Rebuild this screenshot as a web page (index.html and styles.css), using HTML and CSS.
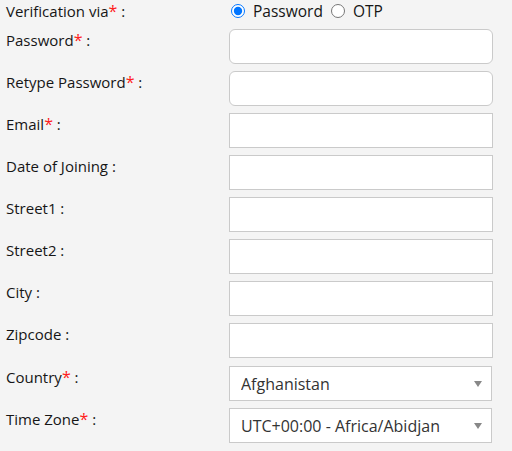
FILE: index.html
```html
<!DOCTYPE html>
<html>
<head>
<meta charset="utf-8">
<link rel="stylesheet" href="styles.css">
</head>
<body>
<form class="form">
  <div class="row row-radio">
    <label class="lbl">Verification via<span class="req">*</span> :</label>
    <div class="ctrl radios">
      <label class="opt"><input type="radio" name="via" checked> Password</label>
      <label class="opt"><input type="radio" name="via"> OTP</label>
    </div>
  </div>
  <div class="row">
    <label class="lbl">Password<span class="req">*</span> :</label>
    <input class="field rounded" type="password">
  </div>
  <div class="row">
    <label class="lbl">Retype Password<span class="req">*</span> :</label>
    <input class="field rounded" type="password">
  </div>
  <div class="row">
    <label class="lbl">Email<span class="req">*</span> :</label>
    <input class="field" type="text">
  </div>
  <div class="row">
    <label class="lbl">Date of Joining :</label>
    <input class="field" type="text">
  </div>
  <div class="row">
    <label class="lbl">Street1 :</label>
    <input class="field" type="text">
  </div>
  <div class="row">
    <label class="lbl">Street2 :</label>
    <input class="field" type="text">
  </div>
  <div class="row">
    <label class="lbl">City :</label>
    <input class="field" type="text">
  </div>
  <div class="row">
    <label class="lbl">Zipcode :</label>
    <input class="field" type="text">
  </div>
  <div class="row row-select first-select">
    <label class="lbl">Country<span class="req">*</span> :</label>
    <div class="select-wrap">
      <select class="field sel"><option>Afghanistan</option></select>
    </div>
  </div>
  <div class="row row-select">
    <label class="lbl">Time Zone<span class="req">*</span> :</label>
    <div class="select-wrap">
      <select class="field sel"><option>UTC+00:00 - Africa/Abidjan</option></select>
    </div>
  </div>
</form>
</body>
</html>
```

FILE: styles.css
```css
html, body {
  margin: 0;
  padding: 0;
  background: #f4f4f4;
}
body {
  font-family: "Open Sans", "Liberation Sans", sans-serif;
  font-size: 15px;
  color: #161616;
}
.form {
  padding-left: 6px;
  display: flex;
  flex-direction: column;
}
.row {
  display: flex;
  align-items: flex-start;
  margin-bottom: 7px;
}
.row-radio {
  height: 22px;
}
.lbl {
  width: 223px;
  flex: none;
  line-height: 20px;
  padding-top: 1px;
}
.row-radio .lbl {
  padding-top: 1px;
}
.req {
  color: #ff1a1a;
  font-size: 16px;
}
.radios {
  display: flex;
  align-items: center;
  gap: 6px;
  padding-top: 1px;
  line-height: 20px;
  font-size: 15.5px;
}
.opt {
  display: flex;
  align-items: center;
  gap: 8px;
}
.opt input {
  margin: 0 0 0 2px;
  width: 14px;
  height: 14px;
}
.field {
  box-sizing: border-box;
  width: 264px;
  height: 35px;
  margin: 0;
  border: 1px solid #cacaca;
  background: #fff;
  border-radius: 0;
  font-family: inherit;
  font-size: 16px;
  color: #333;
  outline: none;
}
.rounded {
  border-radius: 6px;
}
.first-select {
  margin-top: 1px;
}
.row-select .lbl {
  padding-top: 1px;
}
.select-wrap {
  position: relative;
  width: 263px;
}
.sel {
  width: 263px;
  appearance: none;
  -webkit-appearance: none;
  padding: 0 24px 0 11px;
}
.select-wrap::after {
  content: "";
  position: absolute;
  right: 10px;
  top: 15px;
  border-left: 4px solid transparent;
  border-right: 4px solid transparent;
  border-top: 6px solid #888;
}
```
